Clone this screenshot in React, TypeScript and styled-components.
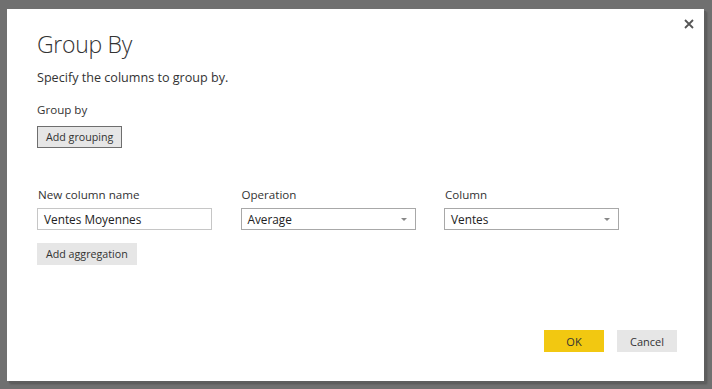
import React from "react";
import styled, { createGlobalStyle } from "styled-components";

const Global = createGlobalStyle`
  html, body { margin: 0; padding: 0; }
  body {
    background: #707070;
    width: 712px;
    height: 389px;
    overflow: hidden;
    font-family: "Open Sans", "Noto Sans", sans-serif;
  }
`;

const Page = styled.div`
  padding: 9px 0 0 7px;
`;

const Dialog = styled.div`
  position: relative;
  box-sizing: border-box;
  width: 697px;
  height: 372px;
  background: #ffffff;
  box-shadow: 2px 2px 0 #5e5e5e, 3px 3px 2px rgba(0, 0, 0, 0.25);
  padding: 19px 30px 0 30px;
  display: flex;
  flex-direction: column;
  color: #333333;
`;

const Close = styled.button`
  position: absolute;
  top: 7px;
  right: 7px;
  width: 16px;
  height: 16px;
  padding: 0;
  border: 0;
  background: transparent;
  display: flex;
  align-items: center;
  justify-content: center;
`;

const Title = styled.h1`
  margin: 0;
  font-family: "Open Sans", sans-serif;
  font-weight: 300;
  font-size: 23px;
  line-height: 32px;
  color: #333333;
  letter-spacing: -0.3px;
`;

const Subtitle = styled.p`
  margin: 9px 0 0 0;
  font-size: 12.6px;
  line-height: 18px;
  color: #333333;
`;

const SectionLabel = styled.div`
  margin-top: 14px;
  font-size: 11.6px;
  line-height: 17px;
  color: #333333;
`;

const GrayButton = styled.button<{ $bordered?: boolean; $top?: number }>`
  align-self: flex-start;
  box-sizing: border-box;
  margin-top: ${(p) => p.$top ?? 0}px;
  height: 22px;
  padding: 0 ${(p) => (p.$bordered ? 8 : 9)}px;
  border: ${(p) => (p.$bordered ? "1px solid #6e6e6e" : "0")};
  background: #e6e6e6;
  font-family: "Open Sans", sans-serif;
  font-size: 10.7px;
  color: #333333;
  line-height: 20px;
`;

const Fields = styled.div`
  margin-top: 38px;
  display: grid;
  grid-template-columns: 175px 175px 175px;
  column-gap: 28.5px;
`;

const Field = styled.div`
  display: flex;
  flex-direction: column;
`;

const FieldLabel = styled.label`
  font-size: 11.6px;
  line-height: 17px;
  color: #333333;
  padding-left: 1px;
  margin-bottom: 5px;
`;

const Box = styled.div<{ $light?: boolean }>`
  box-sizing: border-box;
  height: 22px;
  border: 1px solid ${(p) => (p.$light ? "#c6c6c6" : "#a8a8a8")};
  background: #fff;
  display: flex;
  align-items: center;
  justify-content: space-between;
  padding: 0 8px 0 6px;
  font-size: 11.8px;
  color: #222222;
`;

const Caret = styled.span`
  width: 0;
  height: 0;
  border-left: 3px solid transparent;
  border-right: 3px solid transparent;
  border-top: 3px solid #888888;
`;

const Footer = styled.div`
  margin-top: auto;
  margin-bottom: 29px;
  margin-right: -3px;
  display: flex;
  justify-content: flex-end;
  gap: 13px;
`;

const FooterButton = styled.button<{ $primary?: boolean }>`
  width: 60px;
  height: 22px;
  border: 0;
  padding: 0;
  background: ${(p) => (p.$primary ? "#f2c811" : "#e6e6e6")};
  font-family: "Open Sans", sans-serif;
  font-size: 11px;
  color: #333333;
`;

export default function App() {
  return (
    <>
      <Global />
      <Page>
        <Dialog>
          <Close aria-label="Close">
            <svg width="10" height="10" viewBox="0 0 10 10">
              <path d="M1 1 L9 9 M9 1 L1 9" stroke="#555" strokeWidth="1.8" />
            </svg>
          </Close>
          <Title>Group By</Title>
          <Subtitle>Specify the columns to group by.</Subtitle>
          <SectionLabel>Group by</SectionLabel>
          <GrayButton $bordered $top={8}>Add grouping</GrayButton>
          <Fields>
            <Field>
              <FieldLabel>New column name</FieldLabel>
              <Box $light>Ventes Moyennes</Box>
            </Field>
            <Field>
              <FieldLabel>Operation</FieldLabel>
              <Box>
                Average
                <Caret />
              </Box>
            </Field>
            <Field>
              <FieldLabel>Column</FieldLabel>
              <Box>
                Ventes
                <Caret />
              </Box>
            </Field>
          </Fields>
          <GrayButton $top={13}>Add aggregation</GrayButton>
          <Footer>
            <FooterButton $primary>OK</FooterButton>
            <FooterButton>Cancel</FooterButton>
          </Footer>
        </Dialog>
      </Page>
    </>
  );
}
